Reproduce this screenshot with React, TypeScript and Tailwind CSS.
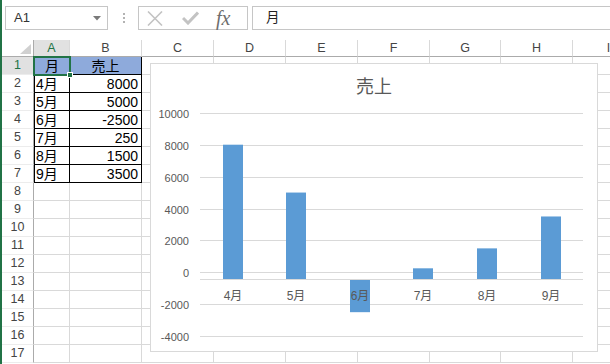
import React from 'react';

const COLS = ['A', 'B', 'C', 'D', 'E', 'F', 'G', 'H', 'I'];

const sales: [string, number][] = [
  ['4月', 8000],
  ['5月', 5000],
  ['6月', -2500],
  ['7月', 250],
  ['8月', 1500],
  ['9月', 3500],
];

const ROWS = Array.from({ length: 17 }, (_, i) => i + 1);

// chart scale (svg coords inside the chart border)
const zeroY = 208.3;
const perUnit = 0.01595;
const axisY = 215;
const toY = (v: number) => zeroY - v * perUnit;
const barX = [72, 135, 199, 262, 326, 390];
const ticks = [10000, 8000, 6000, 4000, 2000, 0, -2000, -4000];

const FormulaBar = () => (
  <div className="flex h-[40px] items-start pt-[6px]">
    <div className="ml-[3px] flex h-[24px] w-[103px] items-center justify-between border border-[#c6c6c6] pl-[8px] pr-[6px]">
      <span className="text-[13px] text-[#333]">A1</span>
      <svg width="8" height="5" viewBox="0 0 8 5">
        <path d="M0 0 L8 0 L4 4.5 Z" fill="#7a7a7a" />
      </svg>
    </div>
    <div className="ml-[15px] mr-[13px] flex h-[24px] flex-col items-center justify-center gap-[2px]">
      <span className="h-[2px] w-[2px] bg-[#b3b3b3]" />
      <span className="h-[2px] w-[2px] bg-[#b3b3b3]" />
      <span className="h-[2px] w-[2px] bg-[#b3b3b3]" />
    </div>
    <div className="flex h-[24px] w-[110px] items-center border border-[#c6c6c6] pl-[8px]">
      <svg width="16" height="15" viewBox="0 0 16 15">
        <path d="M1 0.5 L15 14.5 M15 0.5 L1 14.5" stroke="#c3c3c3" strokeWidth="1.6" fill="none" />
      </svg>
      <svg width="17" height="14" viewBox="0 0 17 14" className="ml-[19px]">
        <path d="M1 7 L6 12 L16 1.5" stroke="#c3c3c3" strokeWidth="3" fill="none" />
      </svg>
      <span className="ml-[17px] font-['Liberation_Serif'] text-[20px] italic leading-none text-[#6e6e6e]">fx</span>
    </div>
    <div className="ml-[4px] flex h-[24px] flex-1 items-center border-y border-l border-[#c6c6c6] pl-[13px]">
      <span className="text-[13.5px] text-[#222]">月</span>
    </div>
  </div>
);

const Chart = () => (
  <div className="absolute left-[148px] top-[63px] h-[289px] w-[448px] border border-[#d9d9d9] bg-white">
    <svg width="446" height="287" className="block font-['Liberation_Sans','Noto_Sans_CJK_JP',sans-serif]">
      <text x="223" y="28.5" textAnchor="middle" fontSize="18" fill="#595959" fontFamily="Noto Sans CJK JP, sans-serif">
        売上
      </text>
      {ticks.map((t) => {
        const y = Math.round(toY(t)) + 0.5;
        return (
          <g key={t}>
            <line x1="49" x2="432" y1={y} y2={y} stroke="#d9d9d9" strokeWidth="1" />
            <text x="38" y={y + 4} textAnchor="end" fontSize="11" fill="#595959">
              {t}
            </text>
          </g>
        );
      })}
      <line x1="49" x2="432" y1={axisY + 0.5} y2={axisY + 0.5} stroke="#d9d9d9" strokeWidth="1" />
      {sales.map(([m, v], i) => {
        const top = v >= 0 ? toY(v) : axisY + 1;
        const h = v >= 0 ? axisY - toY(v) : toY(v) - axisY - 1;
        return <rect key={m} x={barX[i]} y={top} width="20" height={h} fill="#5b9bd5" />;
      })}
      {sales.map(([m], i) => (
        <text key={m} x={barX[i] + 10} y="235.5" textAnchor="middle" fontSize="12" fill="#595959">
          {m}
        </text>
      ))}
    </svg>
  </div>
);

export default function App() {
  return (
    <div className="relative h-[364px] w-[610px] overflow-hidden border-l-2 border-[#217346] bg-white font-['Liberation_Sans','Noto_Sans_CJK_JP',sans-serif]">
      <FormulaBar />
      <div className="grid grid-cols-[32px_36px_72px_72px_72px_72px_72px_71px_72px_72px] grid-rows-[17px_repeat(17,18px)]">
        <div className="relative border-b border-r border-[#ababab]">
          <svg width="11" height="10" viewBox="0 0 11 10" className="absolute right-[2px] bottom-[2px]">
            <path d="M11 0 L11 10 L0 10 Z" fill="#d0d0d0" />
          </svg>
        </div>
        {COLS.map((c) => (
          <div
            key={c}
            className={`flex items-center justify-center border-b border-r border-b-[#ababab] border-r-[#d9d9d9] text-[12.5px] ${
              c === 'A' ? 'bg-[#e1e1e1] text-[#217346]' : 'text-[#444]'
            }`}
          >
            {c}
          </div>
        ))}
        {ROWS.map((r) => (
          <React.Fragment key={r}>
            <div
              className={`flex items-center justify-center border-b border-r border-b-[#ececec] border-r-[#ababab] text-[12.5px] ${
                r === 1 ? 'bg-[#e1e1e1] text-[#217346]' : 'text-[#444]'
              }`}
            >
              {r}
            </div>
            {COLS.map((c) => {
              const inTable = r <= 7 && (c === 'A' || c === 'B');
              if (!inTable) {
                return <div key={c} className="border-b border-r border-[#d9d9d9]" />;
              }
              const head = r === 1;
              let text: string | number = '';
              if (head) text = c === 'A' ? '月' : '売上';
              else text = c === 'A' ? sales[r - 2][0] : sales[r - 2][1];
              return (
                <div
                  key={c}
                  className={`flex items-center border-b border-r border-black text-[14px] leading-none text-black ${
                    c === 'A' ? 'border-l' : ''
                  } ${head ? 'justify-center bg-[#8eaadb]' : c === 'A' ? 'pl-[1px]' : 'justify-end pr-[3px]'}`}
                >
                  {text}
                </div>
              );
            })}
          </React.Fragment>
        ))}
      </div>
      {/* active cell A1 */}
      <div className="pointer-events-none absolute left-[31px] top-[56px] h-[20px] w-[38px] border-2 border-[#217346]">
        <div className="absolute -bottom-[4px] -right-[4px] h-[6px] w-[6px] border border-white bg-[#217346]" />
      </div>
      <Chart />
    </div>
  );
}
